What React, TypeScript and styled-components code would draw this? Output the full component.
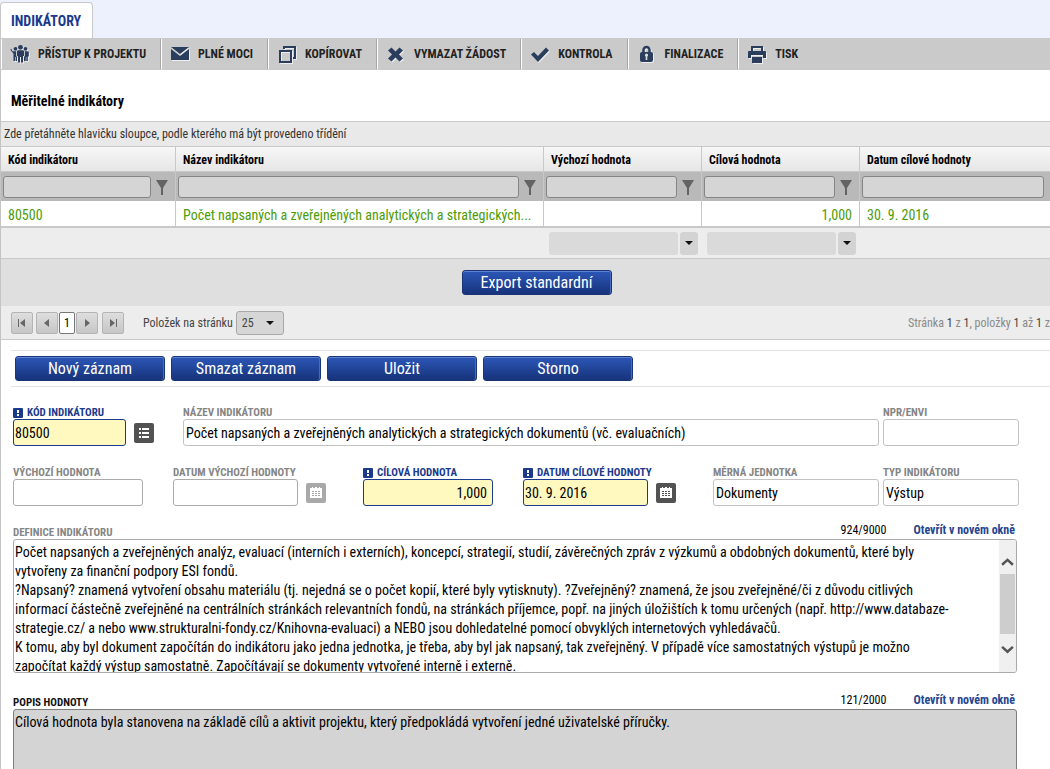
import React from "react";
import styled, { createGlobalStyle, css } from "styled-components";

const Global = createGlobalStyle`
  *, *::before, *::after { box-sizing: border-box; }
  body {
    margin: 0;
    background: #fff;
    color: #000;
    font-family: "Roboto Condensed", "Liberation Sans Narrow", Roboto, "Liberation Sans", sans-serif;
    font-size: 12px;
  }
  button, input, select, textarea { font: inherit; color: inherit; margin: 0; }
`;

const Page = styled.div`
  background: #edf1fd;
  padding-top: 2px;
`;

const Tabs = styled.nav`
  display: flex;
  height: 36px;
`;

const Tab = styled.a`
  display: flex;
  align-items: center;
  padding: 0 11px 0 10px;
  background: #fff;
  border: 1px solid #c8c8c8;
  border-bottom: 0;
  border-radius: 4px 4px 0 0;
  color: #1b3a8c;
  font-size: 14px;
  font-weight: 700;
  text-decoration: none;
`;

const Panel = styled.main`
  background: #fff;
  border-left: 1px solid #c4c4c4;
`;

const Toolbar = styled.div`
  display: flex;
  height: 32px;
  padding: 1px 0;
  background: #cacaca;
`;

const ToolButton = styled.button`
  display: flex;
  align-items: center;
  gap: 8px;
  padding: 0 14px 0 8px;
  border: 0;
  border-left: 1px solid #fff;
  border-right: 1px solid #a6a6a6;
  background: none;
  color: #222;
  font-size: 12px;
  font-weight: 700;
  white-space: nowrap;
  &:last-child { border-right: 0; }
  svg {
    width: 20px;
    height: 20px;
    filter: drop-shadow(1px 1px 0 #eee);
  }
`;

const Title = styled.h1`
  margin: 0;
  padding: 21px 10px 0;
  height: 51px;
  font-size: 14px;
  line-height: 20px;
  font-weight: 700;
`;

const GroupBar = styled.div`
  height: 25px;
  padding: 0 3px;
  border-top: 1px solid #c8c8c8;
  background: #e9e9e9;
  color: #333;
  line-height: 24px;
`;

const Grid = styled.table`
  width: 100%;
  table-layout: fixed;
  border-collapse: separate;
  border-spacing: 0;
  th, td {
    padding: 0 7px;
    border-right: 1px solid #c8c8c8;
    text-align: left;
    overflow: hidden;
    white-space: nowrap;
    text-overflow: ellipsis;
  }
  th:last-child, td:last-child { border-right: 0; }
`;

const HeadRow = styled.tr`
  height: 25px;
  th {
    padding-top: 2px;
    border-top: 1px solid #c8c8c8;
    background: linear-gradient(#f7f7f7, #e6e6e6);
    font-weight: 700;
  }
`;

const FilterRow = styled.tr`
  height: 30px;
  td {
    padding: 0 2px;
    border-top: 1px solid #c8c8c8;
    background: #b9b9b9;
  }
`;

const FilterCell = styled.div`
  display: flex;
  align-items: center;
  gap: 4px;
  padding-right: 4px;
  svg { flex: none; width: 14px; height: 16px; }
  button {
    display: flex;
    padding: 0;
    border: 0;
    background: none;
  }
`;

const FilterInput = styled.input`
  flex: 1;
  min-width: 0;
  height: 22px;
  border: 1px solid #858585;
  border-radius: 3px;
  background: #d5d5d5;
`;

const DataRow = styled.tr`
  height: 25px;
  color: #4c9c06;
  font-size: 14px;
  td { padding-top: 3px; }
`;

const NumberCell = styled.td`
  && { text-align: right; }
`;

const FootRow = styled.tr`
  height: 33px;
  td {
    border-top: 2px solid #c8c8c8;
    border-bottom: 1px solid #c8c8c8;
    border-right: 0;
    background: #ededed;
    padding: 0 4px 0 5px;
  }
`;

const Aggregate = styled.div`
  display: flex;
  gap: 2px;
  input {
    flex: 1;
    min-width: 0;
    height: 23px;
    border: 0;
    border-radius: 3px;
    background: #dadada;
  }
  button {
    display: flex;
    align-items: center;
    justify-content: center;
    width: 18px;
    height: 23px;
    padding: 0;
    border: 0;
    border-radius: 3px;
    background: #d3d3d3;
  }
`;

const ExportBar = styled.div`
  display: flex;
  justify-content: center;
  align-items: center;
  height: 47px;
  padding-left: 22px;
  background: #dfdfdf;
`;

const BlueButton = styled.button`
  width: 150px;
  height: 25px;
  padding: 0;
  border: 1px solid #1a3577;
  border-radius: 3px;
  background: linear-gradient(#2c57b8, #17337a);
  box-shadow: inset 0 1px 0 #5e83d2, inset -1px 0 0 #4a6cb8;
  color: #fff;
  font-size: 16px;
  line-height: 24px;
`;

const Pager = styled.div`
  display: flex;
  align-items: center;
  height: 34px;
  padding-left: 10px;
  overflow: hidden;
  border-bottom: 1px solid #c8c8c8;
  background: #ededed;
  color: #444;
  white-space: nowrap;
`;

const PageButton = styled.button<{ $gap?: number; $current?: boolean }>`
  display: flex;
  align-items: center;
  justify-content: center;
  width: ${(p) => (p.$current ? 16 : 22)}px;
  height: 22px;
  margin-right: ${(p) => p.$gap ?? 0}px;
  padding: 0;
  border: 1px solid ${(p) => (p.$current ? "#777" : "#b4b4b4")};
  border-radius: 2px;
  background: ${(p) => (p.$current ? "#fff" : "linear-gradient(#dedede, #c6c6c6)")};
  color: #000;
  svg { width: 12px; height: 12px; }
`;

const PageSize = styled.label`
  display: flex;
  align-items: center;
  gap: 3px;
  margin-left: 19px;
`;

const SelectBox = styled.span`
  display: grid;
  align-items: center;
  width: 48px;
  height: 24px;
  border: 1px solid #a9a9a9;
  border-radius: 3px;
  background: #d6d6d6;
  select {
    grid-area: 1 / 1;
    width: 100%;
    height: 22px;
    padding: 0 5px;
    border: 0;
    background: none;
    appearance: none;
  }
  svg {
    grid-area: 1 / 1;
    justify-self: end;
    margin-right: 9px;
    pointer-events: none;
  }
`;

const PageInfo = styled.span`
  margin-left: auto;
  color: #8a8a8a;
  b { color: #444; font-weight: 400; }
`;

const Actions = styled.div`
  display: flex;
  gap: 6px;
  margin: 10px 0 0 10px;
  padding: 5px 4px;
  border-top: 1px solid #e2e2e2;
  border-bottom: 1px solid #e2e2e2;
`;

const Form = styled.form`
  padding: 18px 31px 20px 12px;
`;

const FormRow = styled.div`
  display: flex;
  height: 60px;
`;

const Field = styled.div<{ $width?: number }>`
  ${(p) => (p.$width ? css`flex: none; width: ${p.$width}px;` : css`flex: 1; min-width: 0; margin-right: 4px;`)}
`;

const Label = styled.label<{ $tone?: "required" | "dark" }>`
  display: flex;
  align-items: center;
  gap: 4px;
  height: 14px;
  padding-top: 2px;
  color: ${(p) => (p.$tone === "required" ? "#1b3a8c" : p.$tone === "dark" ? "#111" : "#858585")};
  font-size: 11px;
  font-weight: 700;
  line-height: 12px;
  white-space: nowrap;
`;

const Controls = styled.div`
  display: flex;
  align-items: center;
  gap: 8px;
`;

const TextInput = styled.input<{ $width?: number; $required?: boolean; $readonly?: boolean; $right?: boolean }>`
  width: ${(p) => (p.$width ? `${p.$width}px` : "100%")};
  height: 27px;
  padding: 0 ${(p) => (p.$right ? 5 : 2)}px 0 ${(p) => (p.$readonly ? 2 : 1)}px;
  border: 1px solid ${(p) => (p.$required ? "#1b3a8c" : p.$readonly ? "#c3c3c3" : "#ababab")};
  border-radius: 3px;
  background: ${(p) => (p.$required ? "#fff9bf" : "#fff")};
  font-size: 14px;
  text-align: ${(p) => (p.$right ? "right" : "left")};
`;

const SquareButton = styled.button<{ $muted?: boolean }>`
  display: flex;
  align-items: center;
  justify-content: center;
  width: 20px;
  height: 20px;
  padding: 0;
  border: 0;
  border-radius: 2px;
  background: ${(p) => (p.$muted ? "#a9a9a9" : "#525252")};
`;

const AreaHead = styled.div`
  display: flex;
  justify-content: space-between;
  align-items: center;
  height: 14px;
  padding-right: 4px;
`;

const AreaInfo = styled.div`
  display: flex;
  gap: 27px;
  padding-bottom: 4px;
  a { color: #1f468f; font-weight: 700; text-decoration: none; }
`;

const AreaBox = styled.div<{ $grey?: boolean }>`
  display: flex;
  height: 134px;
  margin: 0 2px 22px 0;
  overflow: hidden;
  border: 1px solid ${(p) => (p.$grey ? "#7d7d7d" : "#ababab")};
  border-radius: 3px;
  background: ${(p) => (p.$grey ? "#d4d4d4" : "#fff")};
  textarea {
    flex: 1;
    min-width: 0;
    height: 100%;
    padding: 3px 36px 3px 1px;
    border: 0;
    outline: 0;
    resize: none;
    overflow: hidden;
    background: none;
    font-size: 14px;
    line-height: 19px;
  }
`;

const ScrollTrack = styled.div`
  display: flex;
  flex-direction: column;
  align-items: center;
  width: 17px;
  padding: 13px 1px;
  background: #f0f0f0;
  svg { width: 13px; height: 19px; }
`;

const ScrollThumb = styled.div`
  width: 15px;
  height: 62px;
  margin: 2px 0 6px;
  background: #cdcdcd;
`;

const Caret = () => (
  <svg width="8" height="6" viewBox="0 0 8 6" aria-hidden="true"><path d="M0 1h8L4 5z" fill="#111" /></svg>
);

const Funnel = () => (
  <svg viewBox="0 0 14 16" aria-hidden="true"><path d="M1 1h12L8 9v7H6V9z" fill="#636363" /></svg>
);

const Required = () => (
  <svg width="10" height="10" viewBox="0 0 10 10" aria-hidden="true">
    <rect width="10" height="10" rx="1" fill="#1b3a8c" />
    <path d="M4 2h2v3H4zM4 6h2v2H4z" fill="#fff" />
  </svg>
);

const ListIcon = () => (
  <svg width="12" height="12" viewBox="0 0 12 12" aria-hidden="true">
    <path d="M1 1h2v2H1zM4 1h7v2H4zM1 5h2v2H1zM4 5h7v2H4zM1 9h2v2H1zM4 9h7v2H4z" fill="#fff" />
  </svg>
);

const CalendarIcon = ({ hole }: { hole: string }) => (
  <svg width="12" height="12" viewBox="0 0 12 12" aria-hidden="true">
    <path d="M0 1h2V0h1v1h2V0h2v1h2V0h1v1h2v10H0z" fill="#fff" />
    <path d="M2 4h2v1H2zM5 4h2v1H5zM8 4h2v1H8zM2 6h2v1H2zM5 6h2v1H5zM8 6h2v1H8zM2 8h2v1H2zM5 8h2v1H5zM8 8h2v1H8z" fill={hole} />
  </svg>
);

const INK = "#2b3d5c";

const tools = [
  {
    label: "PŘÍSTUP K PROJEKTU",
    icon: (
      <g fill={INK}>
        <circle cx="10.500" cy="3.300" r="2.400" />
        <circle cx="5.500" cy="4.800" r="1.900" />
        <circle cx="15.500" cy="4.800" r="1.900" />
        <path d="M8.300 6.300h4.400q1.300 0 1.300 1.300V12h-1v6.500h-2V13h-1v5.500H8V12H7V7.600q0-1.300 1.300-1.300z" />
        <path d="M1 4.500l1.700 2.700h3.500V12l.800.700v4.300H5.700v-4h-.600v4H3.500V9.700L.500 6z" />
        <path d="M14.800 7.200h2.700q1.300 0 1.300 1.300V12.500h-1V17h-1.500v-4h-.500v4H14v-4.300l.8-.7z" />
      </g>
    ),
  },
  {
    label: "PLNÉ MOCI",
    icon: (
      <g fill={INK}>
        <path d="M1 3h18l-9 7z" />
        <path d="M1 5l9 7 9-7v11H1z" />
      </g>
    ),
  },
  {
    label: "KOPÍROVAT",
    icon: (
      <g fill="none" stroke={INK} strokeWidth="2">
        <path d="M3 7h11v11H3z" />
        <path d="M7 5V3h11v11h-2" />
      </g>
    ),
  },
  {
    label: "VYMAZAT ŽÁDOST",
    icon: <path d="M5.500 3.500L9.500 7.500l4-4L17 6.500l-4 4 4 4-3.500 3-4-4-4 4L2 14.500l4-4-4-4z" fill={INK} />,
  },
  {
    label: "KONTROLA",
    icon: <path d="M1 10.500L4 8l4 4 8-8.500 3 3L8 18z" fill={INK} />,
  },
  {
    label: "FINALIZACE",
    icon: (
      <g>
        <path d="M6.500 10V6a3 3 0 0 1 6 0v4" fill="none" stroke={INK} strokeWidth="2.500" />
        <rect x="3" y="8" width="13" height="10" rx="2" fill={INK} />
        <path d="M8 11a1.500 1.500 0 0 1 3 0v1l-.700.500V16H8.700v-3.500L8 12z" fill="#ddd" />
      </g>
    ),
  },
  {
    label: "TISK",
    icon: (
      <g>
        <path d="M5 7V3h10v4" fill="none" stroke={INK} strokeWidth="2" />
        <path d="M1 8a1 1 0 0 1 1-1h16a1 1 0 0 1 1 1v6h-3v-3H4v3H1z" fill={INK} />
        <path d="M5 13h10v6H5z" fill={INK} />
      </g>
    ),
  },
];

const columns = [
  { name: "Kód indikátoru", width: 175 },
  { name: "Název indikátoru", width: undefined },
  { name: "Výchozí hodnota", width: 158 },
  { name: "Cílová hodnota", width: 158 },
  { name: "Datum cílové hodnoty", width: 190 },
];

const definition = `Počet napsaných a zveřejněných analýz, evaluací (interních i externích), koncepcí, strategií, studií, závěrečných zpráv z výzkumů a obdobných dokumentů, které byly vytvořeny za finanční podpory ESI fondů.
?Napsaný? znamená vytvoření obsahu materiálu (tj. nejedná se o počet kopií, které byly vytisknuty). ?Zveřejněný? znamená, že jsou zveřejněné/či z důvodu citlivých informací částečně zveřejněné na centrálních stránkách relevantních fondů, na stránkách příjemce, popř. na jiných úložištích k tomu určených (např. http://www.databaze-strategie.cz/ a nebo www.strukturalni-fondy.cz/Knihovna-evaluaci) a NEBO jsou dohledatelné pomocí obvyklých internetových vyhledávačů.
K tomu, aby byl dokument započítán do indikátoru jako jedna jednotka, je třeba, aby byl jak napsaný, tak zveřejněný. V případě více samostatných výstupů je možno započítat každý výstup samostatně. Započítávají se dokumenty vytvořené interně i externě.`;

const AggregateCell = ({ name }: { name: string }) => (
  <td>
    <Aggregate>
      <input aria-label={name} readOnly />
      <button type="button" aria-label={name}><Caret /></button>
    </Aggregate>
  </td>
);

export default function App() {
  return (
    <>
      <Global />
      <Page>
        <Tabs><Tab href="#indikatory">INDIKÁTORY</Tab></Tabs>
        <Panel>
          <Toolbar>
            {tools.map((t) => (
              <ToolButton key={t.label} type="button">
                <svg viewBox="0 0 20 20" aria-hidden="true">{t.icon}</svg>
                {t.label}
              </ToolButton>
            ))}
          </Toolbar>
          <Title>Měřitelné indikátory</Title>
          <GroupBar>Zde přetáhněte hlavičku sloupce, podle kterého má být provedeno třídění</GroupBar>
          <Grid>
            <colgroup>
              {columns.map((c) => <col key={c.name} width={c.width} />)}
            </colgroup>
            <thead>
              <HeadRow>{columns.map((c) => <th key={c.name}>{c.name}</th>)}</HeadRow>
            </thead>
            <tbody>
              <FilterRow>
                {columns.map((c, i) => (
                  <td key={c.name}>
                    <FilterCell>
                      <FilterInput aria-label={c.name} />
                      {i < 4 && <button type="button" aria-label={c.name}><Funnel /></button>}
                    </FilterCell>
                  </td>
                ))}
              </FilterRow>
              <DataRow>
                <td>80500</td>
                <td>Počet napsaných a zveřejněných analytických a strategických...</td>
                <td />
                <NumberCell>1,000</NumberCell>
                <td>30. 9. 2016</td>
              </DataRow>
            </tbody>
            <tfoot>
              <FootRow>
                <td />
                <td />
                <AggregateCell name="Výchozí hodnota" />
                <AggregateCell name="Cílová hodnota" />
                <td />
              </FootRow>
            </tfoot>
          </Grid>
          <ExportBar><BlueButton type="button">Export standardní</BlueButton></ExportBar>
          <Pager>
            <PageButton $gap={3} aria-label="První">
              <svg viewBox="0 0 12 12"><path d="M2 2h1v8H2zM9 2v8L4 6z" fill="#666" /></svg>
            </PageButton>
            <PageButton $gap={1} aria-label="Předchozí">
              <svg viewBox="0 0 12 12"><path d="M8 2v8L3 6z" fill="#666" /></svg>
            </PageButton>
            <PageButton $current $gap={1}>1</PageButton>
            <PageButton $gap={4} aria-label="Další">
              <svg viewBox="0 0 12 12"><path d="M4 2v8l5-4z" fill="#666" /></svg>
            </PageButton>
            <PageButton aria-label="Poslední">
              <svg viewBox="0 0 12 12"><path d="M9 2h1v8H9zM3 2v8l5-4z" fill="#666" /></svg>
            </PageButton>
            <PageSize>
              Položek na stránku
              <SelectBox>
                <select defaultValue="25"><option>25</option><option>50</option></select>
                <Caret />
              </SelectBox>
            </PageSize>
            <PageInfo>Stránka <b>1</b> z <b>1</b>, položky <b>1</b> až <b>1</b> z</PageInfo>
          </Pager>
          <Actions>
            {["Nový záznam", "Smazat záznam", "Uložit", "Storno"].map((a) => (
              <BlueButton key={a} type="button">{a}</BlueButton>
            ))}
          </Actions>
          <Form>
            <FormRow>
              <Field $width={170}>
                <Label htmlFor="kod" $tone="required"><Required />KÓD INDIKÁTORU</Label>
                <Controls>
                  <TextInput id="kod" $width={113} $required defaultValue="80500" />
                  <SquareButton type="button" aria-label="Vybrat"><ListIcon /></SquareButton>
                </Controls>
              </Field>
              <Field>
                <Label htmlFor="nazev">NÁZEV INDIKÁTORU</Label>
                <TextInput id="nazev" $readonly readOnly defaultValue="Počet napsaných a zveřejněných analytických a strategických dokumentů (vč. evaluačních)" />
              </Field>
              <Field $width={136}>
                <Label htmlFor="npr">NPR/ENVI</Label>
                <TextInput id="npr" $readonly readOnly />
              </Field>
            </FormRow>
            <FormRow>
              <Field $width={160}>
                <Label htmlFor="vychozi">VÝCHOZÍ HODNOTA</Label>
                <TextInput id="vychozi" $width={130} />
              </Field>
              <Field $width={190}>
                <Label htmlFor="datumv">DATUM VÝCHOZÍ HODNOTY</Label>
                <Controls>
                  <TextInput id="datumv" $width={125} />
                  <SquareButton type="button" $muted aria-label="Kalendář"><CalendarIcon hole="#a9a9a9" /></SquareButton>
                </Controls>
              </Field>
              <Field $width={160}>
                <Label htmlFor="cilova" $tone="required"><Required />CÍLOVÁ HODNOTA</Label>
                <TextInput id="cilova" $width={130} $required $right defaultValue="1,000" />
              </Field>
              <Field $width={190}>
                <Label htmlFor="datumc" $tone="required"><Required />DATUM CÍLOVÉ HODNOTY</Label>
                <Controls>
                  <TextInput id="datumc" $width={125} $required defaultValue="30. 9. 2016" />
                  <SquareButton type="button" aria-label="Kalendář"><CalendarIcon hole="#525252" /></SquareButton>
                </Controls>
              </Field>
              <Field>
                <Label htmlFor="merna">MĚRNÁ JEDNOTKA</Label>
                <TextInput id="merna" $readonly readOnly defaultValue="Dokumenty" />
              </Field>
              <Field $width={136}>
                <Label htmlFor="typ">TYP INDIKÁTORU</Label>
                <TextInput id="typ" $readonly readOnly defaultValue="Výstup" />
              </Field>
            </FormRow>
            <AreaHead>
              <Label htmlFor="definice">DEFINICE INDIKÁTORU</Label>
              <AreaInfo><span>924/9000</span><a href="#definice">Otevřít v novém okně</a></AreaInfo>
            </AreaHead>
            <AreaBox>
              <textarea id="definice" readOnly defaultValue={definition} />
              <ScrollTrack>
                <svg viewBox="0 0 13 19" aria-hidden="true"><path d="M1 12l5.500-5 5.500 5" fill="none" stroke="#555" strokeWidth="2.500" /></svg>
                <ScrollThumb />
                <svg viewBox="0 0 13 19" aria-hidden="true"><path d="M1 7l5.500 5L12 7" fill="none" stroke="#555" strokeWidth="2.500" /></svg>
              </ScrollTrack>
            </AreaBox>
            <AreaHead>
              <Label htmlFor="popis" $tone="dark">POPIS HODNOTY</Label>
              <AreaInfo><span>121/2000</span><a href="#popis">Otevřít v novém okně</a></AreaInfo>
            </AreaHead>
            <AreaBox $grey>
              <textarea id="popis" defaultValue="Cílová hodnota byla stanovena na základě cílů a aktivit projektu, který předpokládá vytvoření jedné uživatelské příručky." />
            </AreaBox>
          </Form>
        </Panel>
      </Page>
    </>
  );
}
